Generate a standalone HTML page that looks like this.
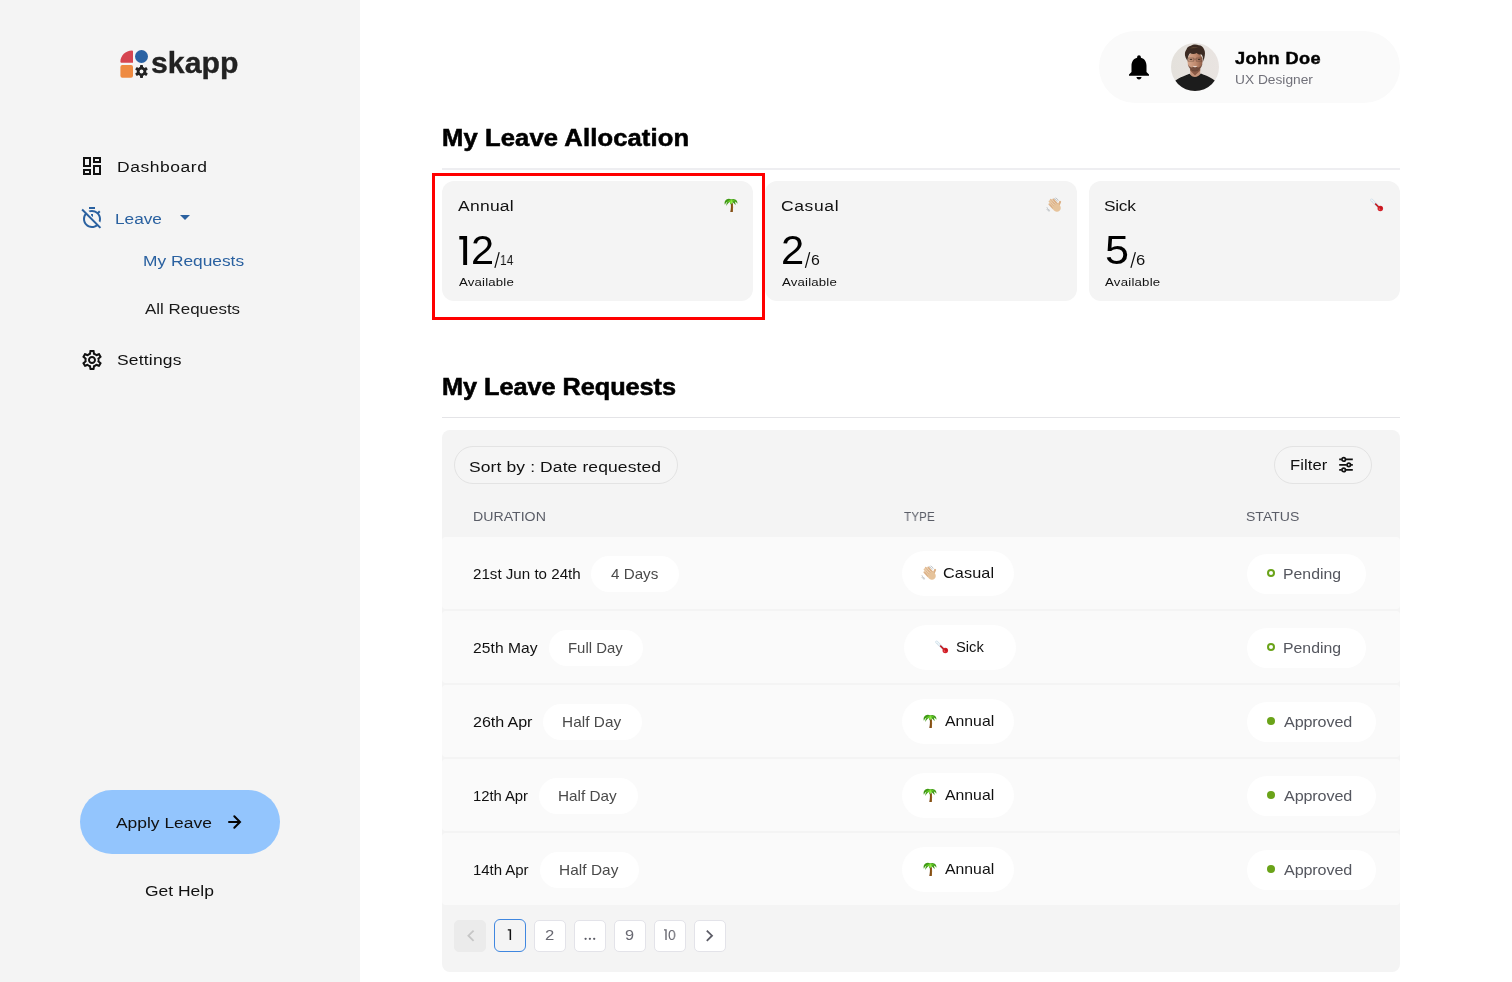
<!DOCTYPE html>
<html><head><meta charset="utf-8"><title>Leave</title>
<style>
*{box-sizing:border-box;margin:0;padding:0}
html,body{width:1512px;height:982px;overflow:hidden;background:#fff;font-family:"Liberation Sans",sans-serif}
body{position:relative}
.t{position:absolute;white-space:nowrap;line-height:1;transform-origin:0 0;will-change:transform}
.abs,.row,.pill,.ring,.dot,.pb,.em,.ic{position:absolute}
.side{left:0;top:0;width:360px;height:982px;background:#f4f4f4}
.btn{left:80px;top:790px;width:200px;height:64px;border-radius:32px;background:#93c5fd}
.hdr{left:1099px;top:31px;width:301px;height:72px;border-radius:36px;background:#fafafa}
.hr{left:442px;width:958px;height:1px;background:#e4e4e7}
.card{top:181px;width:311.33px;height:120px;border-radius:12px;background:#f4f4f4}
.red{left:432px;top:173px;width:333px;height:147px;border:3px solid #ff0000}
.tbl{left:442px;top:429.500px;width:958px;height:542px;border-radius:8px;background:#f4f4f4}
.row{left:442px;width:958px;height:72.300px;background:#fafafa;border-radius:4px}
.pill{background:#fff;border-radius:30px}
.opill{border:1px solid #e3e3e3;border-radius:30px;background:#f5f5f5}
.ring{width:8px;height:8px;border-radius:50%;border:2px solid #6aa319}
.dot{width:8px;height:8px;border-radius:50%;background:#6aa319}
.pb{top:919.500px;width:32px;height:32px;border-radius:5px;background:#fff;border:1.200px solid #e3e3e9}
.pb.dis{background:#ebebeb;border-color:#ebebeb}
.pb.act{background:transparent;border:1.700px solid #3f87e0;top:919.100px;height:32.700px;width:32.200px;margin-left:-.1px;border-radius:6px}
</style></head><body>
<div class="abs side"></div>
<div class="abs btn"></div>
<div class="abs hdr"></div>
<div class="abs hr" style="top:168px;height:2px;background:#eeeef1"></div>
<div class="abs hr" style="top:417px"></div>
<div class="abs card" style="left:442px"></div>
<div class="abs card" style="left:765.33px"></div>
<div class="abs card" style="left:1088.67px"></div>
<div class="abs red"></div>
<div class="abs tbl"></div>
<div class="abs opill" style="left:454px;top:446px;width:224px;height:38px"></div>
<div class="abs opill" style="left:1274px;top:446px;width:98px;height:38px"></div>
<svg width="0" height="0" style="position:absolute">
<defs>
<symbol id="palm" viewBox="0 0 16 16">
 <path d="M9.600 6c.7 2.700.6 5.800.1 8.900H7.300c.7-3.100.8-6 .4-8.900z" fill="#7a4614"/>
 <path d="M8.500 8c.3 2.300.2 4.600 0 6.900h1.200c.4-2.900.5-5.300.1-7.400z" fill="#9a6420" opacity=".8"/>
 <path d="M8.200 2.500C6.300 1.200 3.600 1.600 2.200 3.800c-.8 1.300-.7 2.700-.3 3.900C2.500 6.100 3.400 5 4.600 4.400c-1 1.300-1.400 2.800-1.100 4.600C4.300 7 5.500 5.700 7 5.100c0 .9.400 1.700 1.100 2.300.2-.9.700-1.700 1.300-2.200 1.300.5 2.300 1.600 3 3.100.3-1.500 0-2.800-.8-3.900 1.100.3 2.100 1.100 2.800 2.300.2-1.800-.5-3.400-2.100-4.200-1.300-.8-2.900-.8-4.100 0z" fill="#3f9a14"/>
 <path d="M8.200 2.500c1.400 0 2.800.4 3.800 1.400-.9-.1-1.800.2-2.600 1.300C8.800 5.700 8.300 6.500 8.100 7.400 7.400 6.800 7 6 7 5.100c-.9-.3-2-.2-3.100.4 1-1.700 2.500-2.700 4.300-3z" fill="#62c625"/>
 <path d="M8.200 2.900c.8.400 1.300 1.100 1.400 2-.6.500-1 1.200-1.400 2.100-.6-.6-.9-1.300-.9-2 0-.8.400-1.500.9-2.100z" fill="#90ea45"/>
</symbol>
<symbol id="wave" viewBox="0 0 16 16">
 <path d="M12.300 9.200L14.100 4.900" stroke="#dcb085" stroke-width="2.100" stroke-linecap="round"/>
 <g transform="translate(10.500 10.500) rotate(-42) scale(1.080)">
  <rect x="-3.700" y="-7.600" width="1.750" height="7" rx=".87" fill="#deb58c"/>
  <rect x="-1.850" y="-9.400" width="1.750" height="8.500" rx=".87" fill="#e6c39b"/>
  <rect x="0" y="-9.700" width="1.750" height="9" rx=".87" fill="#e2bb93"/>
  <rect x="1.850" y="-8.400" width="1.700" height="8" rx=".85" fill="#dcb085"/>
  <ellipse cx="0" cy=".2" rx="3.700" ry="4" fill="#e6c39b"/>
  <path d="M-2.800-2.500v-3M-.95-2.500v-4M.95-2.500v-4" stroke="#d1a077" stroke-width=".35" fill="none"/>
 </g>
 <path d="M8.300 1.700c1.200.4 2.200 1.300 2.800 2.500M9.900 1c1 .5 1.800 1.300 2.300 2.300" stroke="#aab0b5" stroke-width=".7" fill="none" stroke-linecap="round"/>
 <path d="M1 10.600c.5 1.200 1.400 2.200 2.700 2.800M.9 12.300c.5.800 1.200 1.500 2.100 1.900" stroke="#aab0b5" stroke-width=".7" fill="none" stroke-linecap="round"/>
</symbol>
<symbol id="thermo" viewBox="0 0 16 16">
 <path d="M2.600 3l7.400 7.300" stroke="#cfe0ea" stroke-width="2.700" stroke-linecap="round"/>
 <path d="M2.600 3l7.400 7.300" stroke="#f4f9fc" stroke-width="1.300" stroke-linecap="round"/>
 <path d="M3.100 4.800l.9-.9M4.500 6.200l.9-.9M5.900 7.600l.9-.9" stroke="#c2d6e2" stroke-width=".5"/>
 <path d="M6.600 7l4 4" stroke="#bf1219" stroke-width="1.600" stroke-linecap="round"/>
 <circle cx="11.300" cy="11.500" r="2.750" fill="#d4212a"/>
 <circle cx="10.500" cy="12.100" r=".8" fill="#ec6468"/>
 <circle cx="12" cy="10.800" r="1.200" fill="#b80f17" opacity=".6"/>
</symbol>
</defs></svg>

<!-- logo -->
<svg class="ic" style="left:120px;top:50px" width="29" height="28" viewBox="0 0 29 28">
 <path d="M13 12.700H1.400a1 1 0 0 1-1-1C.4 5.400 5.600.4 12 .4a1 1 0 0 1 1 1z" fill="#d64550"/>
 <circle cx="21.500" cy="6.500" r="6.500" fill="#2a62a3"/>
 <rect x=".4" y="15" width="12.600" height="12.800" rx="2" fill="#ee8a41"/>
 <g transform="translate(21.500 21.500)" fill="#222">
  <circle r="4.700"/>
  <g id="tth"><rect x="-1.500" y="-6.500" width="3" height="13" rx=".7"/></g>
  <use href="#tth" transform="rotate(60)"/><use href="#tth" transform="rotate(120)"/>
  <circle r="1.900" fill="#f4f4f4"/>
 </g>
</svg>

<!-- dashboard icon -->
<svg class="ic" style="left:80px;top:153.500px" width="24" height="24" viewBox="0 0 24 24" fill="#111"><path d="M19 5v2h-4V5h4M9 5v6H5V5h4m10 8v6h-4v-6h4M9 17v2H5v-2h4M21 3h-8v6h8V3zM11 3H3v10h8V3zm10 8h-8v10h8V11zm-10 4H3v6h8v-6z"/></svg>
<!-- timer off -->
<svg class="ic" style="left:80px;top:205.700px" width="24" height="24" viewBox="0 0 24 24" fill="#2A61A0"><path d="M10.040 6.290C10.660 6.110 11.320 6 12 6c3.860 0 7 3.140 7 7 0 .68-.11 1.340-.29 1.960l1.560 1.560c.47-1.080.73-2.270.73-3.520 0-2.120-.74-4.070-1.970-5.610l1.420-1.420c-.43-.51-.9-.99-1.410-1.410l-1.420 1.420C16.070 4.740 14.120 4 12 4c-1.250 0-2.440.26-3.530.72l1.570 1.570zM9 1h6v2H9zM13 8h-2v1.170l2 2zM2.810 2.810L1.390 4.220l3.400 3.400C3.670 9.120 3 10.980 3 13c0 4.970 4.020 9 9 9 2.020 0 3.880-.67 5.380-1.790l2.400 2.400 1.410-1.410L2.810 2.810zM12 20c-3.860 0-7-3.140-7-7 0-1.470.45-2.830 1.220-3.950l9.730 9.730C14.830 19.550 13.470 20 12 20z"/></svg>
<!-- caret -->
<svg class="ic" style="left:173px;top:205px" width="24" height="24" viewBox="0 0 24 24" fill="#2A61A0"><path d="M7 10l5 5 5-5z"/></svg>
<!-- settings -->
<svg class="ic" style="left:80px;top:347.500px" width="24" height="24" viewBox="0 0 24 24" fill="#111"><path d="M19.430 12.980c.04-.32.070-.64.070-.98 0-.34-.03-.66-.07-.98l2.110-1.650c.19-.15.240-.42.120-.64l-2-3.460c-.09-.16-.26-.25-.44-.25-.06 0-.12.010-.17.030l-2.490 1c-.52-.4-1.080-.73-1.690-.98l-.38-2.650C14.460 2.180 14.250 2 14 2h-4c-.25 0-.46.180-.49.420l-.38 2.650c-.61.250-1.170.59-1.690.98l-2.490-1c-.06-.02-.12-.03-.18-.03-.17 0-.34.090-.43.250l-2 3.460c-.13.220-.07.490.12.640l2.110 1.650c-.04.320-.07.650-.07.980 0 .33.030.66.070.98l-2.110 1.650c-.19.150-.24.420-.12.640l2 3.460c.9.160.26.250.44.250.06 0 .12-.1.170-.03l2.490-1c.52.400 1.080.73 1.690.98l.38 2.650c.3.240.24.420.49.420h4c.25 0 .46-.18.490-.42l.38-2.650c.61-.25 1.170-.59 1.690-.98l2.490 1c.6.020.12.030.18.030.17 0 .34-.9.430-.25l2-3.460c.12-.22.070-.49-.12-.64l-2.110-1.650zm-1.980-1.710c.4.310.5.520.5.730 0 .21-.2.430-.5.730l-.14 1.130.89.700 1.080.84-.7 1.210-1.270-.51-1.040-.42-.9.680c-.43.320-.84.560-1.250.73l-1.060.43-.16 1.130-.2 1.350h-1.400l-.19-1.350-.16-1.130-1.060-.43c-.43-.18-.83-.41-1.230-.71l-.91-.7-1.060.43-1.270.51-.7-1.210 1.080-.84.890-.7-.14-1.130c-.03-.31-.05-.54-.05-.74s.02-.43.050-.73l.14-1.130-.89-.7-1.080-.84.700-1.210 1.270.51 1.040.42.900-.68c.43-.32.840-.56 1.250-.73l1.060-.43.160-1.130.2-1.350h1.390l.19 1.350.16 1.130 1.060.43c.43.180.83.410 1.230.71l.91.700 1.060-.43 1.270-.51.700 1.210-1.070.85-.89.700.14 1.130zM12 8c-2.210 0-4 1.790-4 4s1.790 4 4 4 4-1.790 4-4-1.790-4-4-4zm0 6c-1.100 0-2-.9-2-2s.9-2 2-2 2 .9 2 2-.9 2-2 2z"/></svg>
<!-- arrow forward -->
<svg class="ic" style="left:224px;top:810px" width="24" height="24" viewBox="0 0 24 24" fill="none" stroke="#050505" stroke-width="2" stroke-linecap="round"><path d="M5 12H15.500M10.300 6.300L16 12l-5.700 5.700"/></svg>
<!-- bell -->
<svg class="ic" style="left:1124px;top:52px" width="30" height="30" viewBox="0 0 24 24" fill="#000"><path d="M12 22c1.100 0 2-.9 2-2h-4c0 1.100.89 2 2 2zm6-6v-5c0-3.070-1.640-5.640-4.500-6.320V4c0-.83-.67-1.500-1.500-1.500s-1.500.67-1.500 1.500v.68C7.630 5.360 6 7.920 6 11v5l-2 2v1h16v-1l-2-2z"/></svg>
<!-- avatar -->
<svg class="ic" style="left:1171px;top:43px" width="48" height="48" viewBox="0 0 48 48">
 <defs><clipPath id="av"><circle cx="24" cy="24" r="24"/></clipPath><filter id="bl" x="-20%" y="-20%" width="140%" height="140%"><feGaussianBlur stdDeviation=".55"/></filter>
 <linearGradient id="bgg" x1="0" x2="1"><stop offset="0" stop-color="#e4e1dc"/><stop offset="1" stop-color="#e9e4e1"/></linearGradient>
 <linearGradient id="skn" x1="0" x2="1"><stop offset="0" stop-color="#d6a88d"/><stop offset=".55" stop-color="#c08a6e"/><stop offset="1" stop-color="#8e5d47"/></linearGradient></defs>
 <g clip-path="url(#av)"><rect width="48" height="48" fill="url(#bgg)"/>
 <g filter="url(#bl)">
  <path d="M19.200 25h10v9h-10z" fill="#c4937a"/>
  <path d="M19.200 27.500l4.800 5 5.200-5v-2c-2 2.200-7.500 2.600-10 0z" fill="#8a5a45"/>
  <path d="M2 41c1.500-4.500 8-6.800 16.500-10.200 1.400 2 3.300 3.300 5.500 3.300s4.300-1.500 5.800-3.500C38 33.800 44.500 36.500 46 41v8H2z" fill="#1a1a1a"/>
  <ellipse cx="24" cy="18.200" rx="7.600" ry="9.400" fill="url(#skn)"/>
  <path d="M16.800 21c1 4.600 4 7.400 7.200 7.400s6.400-2.800 7.400-7.400c-1.200 2.300-2.600 3.200-4 3.400-1.200-1-5.600-1-6.800 0-1.400-.3-2.800-1.200-3.800-3.400z" fill="#5f3d2f" opacity=".8"/>
  <path d="M21.800 22.700c1.500.5 2.900.5 4.400 0-.5 1.100-1.300 1.500-2.200 1.500s-1.700-.4-2.200-1.500z" fill="#e6d3c8"/>
  <path d="M14.600 14.500c-1.300-3-.7-6.200 1-8.300.3-1.800 2.200-3.300 4.300-3.500 2-1.400 5.800-1.500 7.800-.4 2.600.1 4.600 1.800 5.300 4 1.300 2.300 1.200 5.300.3 8.700l-.9 3.400c-.2-3.200-.6-5.400-1.900-7-1.700.6-3.400-.1-4.800-1.500-1.900 1.300-4.500 1.200-6.700.4-1.400 1.400-2.200 3.800-2.700 7.400z" fill="#3b2a20"/>
  <path d="M19 5.500c2.500-1.800 6-1.800 8.500-.3-3-.3-6 .2-8.500.3z" fill="#5b4434"/>
  <path d="M17 15h5.800v3.200H17zM25.200 15h5.800v3.200h-5.800zM22.800 16.200h2.400" fill="none" stroke="#5a4034" stroke-width=".55" opacity=".8"/>
  <path d="M18.700 16.400h2.500M26.800 16.400h2.500" stroke="#2e1f18" stroke-width=".9"/>
 </g></g>
</svg>
<!-- filter icon -->
<svg class="ic" style="left:1338px;top:456px" width="16" height="17" viewBox="0 0 16 17" fill="none" stroke="#111" stroke-width="1.700">
 <path d="M1.200 3.400h2.400M8 3.400h6.800M1.200 8.800h7.500M13.100 8.800h1.700M1.200 13.900h2.400M8 13.900h6.800"/>
 <circle cx="5.700" cy="3.400" r="1.750"/><circle cx="10.800" cy="8.800" r="1.750"/><circle cx="5.700" cy="13.900" r="1.750"/>
</svg>
<!-- emoji in cards -->
<svg class="em" style="left:722.500px;top:197px" width="16" height="16" viewBox="0 0 16 16"><use href="#palm"/></svg>
<svg class="em" style="left:1045.800px;top:197px" width="16" height="16" viewBox="0 0 16 16"><use href="#wave"/></svg>
<svg class="em" style="left:1368.500px;top:196.500px" width="16" height="16" viewBox="0 0 16 16"><use href="#thermo"/></svg>
<div class="row" style="top:537.2px"></div>
<div class="pill" style="left:590.9px;top:555.5px;width:88.0px;height:36px"></div>
<div class="pill" style="left:902.0px;top:551.0px;width:112px;height:45px"></div>
<svg class="em" style="left:921px;top:565.0px" width="16" height="16" viewBox="0 0 16 16"><use href="#wave"/></svg>
<div class="pill" style="left:1247px;top:553.5px;width:118.7px;height:40px"></div>
<div class="ring" style="left:1267px;top:569.1px"></div>
<div class="row" style="top:611.2px"></div>
<div class="pill" style="left:549.1px;top:629.5px;width:94.1px;height:36px"></div>
<div class="pill" style="left:903.8px;top:625.0px;width:112px;height:45px"></div>
<svg class="em" style="left:933.5px;top:639.3px" width="16" height="16" viewBox="0 0 16 16"><use href="#thermo"/></svg>
<div class="pill" style="left:1247px;top:627.5px;width:118.7px;height:40px"></div>
<div class="ring" style="left:1267px;top:643.1px"></div>
<div class="row" style="top:685.2px"></div>
<div class="pill" style="left:542.8px;top:703.5px;width:99.2px;height:36px"></div>
<div class="pill" style="left:902.4px;top:699.0px;width:112px;height:45px"></div>
<svg class="em" style="left:921.5px;top:713.0px" width="16" height="16" viewBox="0 0 16 16"><use href="#palm"/></svg>
<div class="pill" style="left:1247px;top:701.5px;width:128.7px;height:40px"></div>
<div class="dot" style="left:1266.800px;top:717.2px"></div>
<div class="row" style="top:759.2px"></div>
<div class="pill" style="left:538.8px;top:777.5px;width:98.8px;height:36px"></div>
<div class="pill" style="left:902.4px;top:773.0px;width:112px;height:45px"></div>
<svg class="em" style="left:921.5px;top:787.0px" width="16" height="16" viewBox="0 0 16 16"><use href="#palm"/></svg>
<div class="pill" style="left:1247px;top:775.5px;width:128.7px;height:40px"></div>
<div class="dot" style="left:1266.800px;top:791.2px"></div>
<div class="row" style="top:833.2px"></div>
<div class="pill" style="left:540.3px;top:851.5px;width:98.6px;height:36px"></div>
<div class="pill" style="left:902.4px;top:847.0px;width:112px;height:45px"></div>
<svg class="em" style="left:921.5px;top:861.0px" width="16" height="16" viewBox="0 0 16 16"><use href="#palm"/></svg>
<div class="pill" style="left:1247px;top:849.5px;width:128.7px;height:40px"></div>
<div class="dot" style="left:1266.800px;top:865.2px"></div>
<div class="pb dis" style="left:454px"></div>
<div class="pb act" style="left:494px"></div>
<div class="pb" style="left:534px"></div>
<div class="pb" style="left:574px"></div>
<div class="pb" style="left:614px"></div>
<div class="pb" style="left:654px"></div>
<div class="pb" style="left:694px"></div>
<!-- pagination chevrons -->
<svg class="ic" style="left:454px;top:919px" width="272" height="33" viewBox="454 919 272 33">
 <path d="M473.600 930.600L468.400 935.700L473.600 940.800" fill="none" stroke="#c6c6c6" stroke-width="1.800"/>
 <path d="M706.800 930.600L712 935.700L706.800 940.800" fill="none" stroke="#5c5c66" stroke-width="1.800"/>
 <g fill="#5c5c66"><circle cx="585.600" cy="938.800" r="1.150"/><circle cx="589.900" cy="938.800" r="1.150"/><circle cx="594.200" cy="938.800" r="1.150"/></g>
 <path d="M507.800 929.200H511.100V939.900H509.600V930.500H507.800z" fill="#111"/>
 <path d="M664 929.200H666.700V939.900H665.300V930.400H664z" fill="#686871"/>
</svg>
<!-- big 1 + slashes -->
<svg class="ic" style="left:442px;top:230px" width="720" height="44" viewBox="442 230 720 44">
 <path d="M459.300 236H467.100V264.900H463.200V239.600H459.300z" fill="#000"/>
 <g stroke="#111" stroke-width="1.250" fill="none"><path d="M499.200 252.100L494.900 267.800M809.700 252.100L805.400 267.800M1135.400 252.100L1130.900 267.800"/></g>
</svg>
<span class="t" id="logo" style="left:151.40px;top:47.51px;font-size:30px;font-weight:bold;color:#222222;letter-spacing:0.045px;transform:scaleX(1.0071);-webkit-text-stroke:.35px #222">skapp</span>
<span class="t" id="nav1" style="left:117.20px;top:159.33px;font-size:15.2px;font-weight:normal;color:#111;letter-spacing:0.489px;transform:scaleX(1.1500);">Dashboard</span>
<span class="t" id="nav2" style="left:115.20px;top:211.23px;font-size:15.2px;font-weight:normal;color:#2A61A0;letter-spacing:-0.001px;transform:scaleX(1.1350);">Leave</span>
<span class="t" id="nav3" style="left:142.80px;top:253.33px;font-size:15.2px;font-weight:normal;color:#2A61A0;letter-spacing:0.001px;transform:scaleX(1.1402);">My Requests</span>
<span class="t" id="nav4" style="left:144.60px;top:301.43px;font-size:15.2px;font-weight:normal;color:#1a1a1a;letter-spacing:-0.001px;transform:scaleX(1.1153);">All Requests</span>
<span class="t" id="nav5" style="left:116.60px;top:352.43px;font-size:15.2px;font-weight:normal;color:#111;letter-spacing:0.166px;transform:scaleX(1.1500);">Settings</span>
<span class="t" id="apply" style="left:116.00px;top:815.33px;font-size:15.2px;font-weight:normal;color:#111;letter-spacing:0.001px;transform:scaleX(1.1470);">Apply Leave</span>
<span class="t" id="help" style="left:144.60px;top:883.33px;font-size:15.2px;font-weight:normal;color:#111;letter-spacing:0.001px;transform:scaleX(1.1500);">Get Help</span>
<span class="t" id="name" style="left:1234.90px;top:49.91px;font-size:17px;font-weight:bold;color:#000;letter-spacing:0.360px;transform:scaleX(1.0700);-webkit-text-stroke:.45px #000">John Doe</span>
<span class="t" id="role" style="left:1234.80px;top:73.16px;font-size:13.4px;font-weight:normal;color:#71717a;letter-spacing:0.000px;transform:scaleX(1.0267);">UX Designer</span>
<span class="t" id="h1" style="left:442.00px;top:127.03px;font-size:23px;font-weight:bold;color:#000;letter-spacing:0.126px;transform:scaleX(1.1100);-webkit-text-stroke:.55px #000">My Leave Allocation</span>
<span class="t" id="h2" style="left:442.00px;top:376.03px;font-size:23px;font-weight:bold;color:#000;letter-spacing:-0.012px;transform:scaleX(1.0972);-webkit-text-stroke:.55px #000">My Leave Requests</span>
<span class="t" id="c1t" style="left:458.20px;top:198.33px;font-size:15.2px;font-weight:normal;color:#111;letter-spacing:0.235px;transform:scaleX(1.1500);">Annual</span>
<span class="t" id="c1n2" style="left:471.40px;top:230.09px;font-size:41px;font-weight:normal;color:#000;letter-spacing:0.000px;transform:scaleX(1.0126);">2</span>
<span class="t" id="c1d" style="left:500.00px;top:252.55px;font-size:14px;font-weight:normal;color:#111;letter-spacing:0.219px;transform:scaleX(0.8400);">14</span>
<span class="t" id="c1a" style="left:459.20px;top:276.77px;font-size:11.5px;font-weight:normal;color:#111;letter-spacing:0.147px;transform:scaleX(1.1500);">Available</span>
<span class="t" id="c2t" style="left:781.30px;top:198.33px;font-size:15.2px;font-weight:normal;color:#111;letter-spacing:0.548px;transform:scaleX(1.1500);">Casual</span>
<span class="t" id="c2n" style="left:781.00px;top:230.09px;font-size:41px;font-weight:normal;color:#000;letter-spacing:0.000px;transform:scaleX(1.0188);">2</span>
<span class="t" id="c2d" style="left:811.40px;top:252.65px;font-size:14px;font-weight:normal;color:#111;letter-spacing:0.000px;transform:scaleX(1.1352);">6</span>
<span class="t" id="c2a" style="left:782.30px;top:276.77px;font-size:11.5px;font-weight:normal;color:#111;letter-spacing:0.147px;transform:scaleX(1.1500);">Available</span>
<span class="t" id="c3t" style="left:1104.40px;top:198.33px;font-size:15.2px;font-weight:normal;color:#111;letter-spacing:-0.265px;transform:scaleX(1.1407);">Sick</span>
<span class="t" id="c3n" style="left:1105.20px;top:230.39px;font-size:41px;font-weight:normal;color:#000;letter-spacing:0.000px;transform:scaleX(1.0526);">5</span>
<span class="t" id="c3d" style="left:1136.40px;top:252.65px;font-size:14px;font-weight:normal;color:#111;letter-spacing:0.000px;transform:scaleX(1.1850);">6</span>
<span class="t" id="c3a" style="left:1105.40px;top:276.77px;font-size:11.5px;font-weight:normal;color:#111;letter-spacing:0.194px;transform:scaleX(1.1500);">Available</span>
<span class="t" id="sort" style="left:469.10px;top:458.93px;font-size:15.2px;font-weight:normal;color:#111;letter-spacing:0.104px;transform:scaleX(1.1500);">Sort by : Date requested</span>
<span class="t" id="filter" style="left:1289.60px;top:457.43px;font-size:15.2px;font-weight:normal;color:#111;letter-spacing:0.080px;transform:scaleX(1.0939);">Filter</span>
<span class="t" id="th1" style="left:473.20px;top:509.86px;font-size:13.4px;font-weight:normal;color:#5a5d67;letter-spacing:0.001px;transform:scaleX(1.0567);">DURATION</span>
<span class="t" id="th2" style="left:903.80px;top:509.86px;font-size:13.4px;font-weight:normal;color:#5a5d67;letter-spacing:0.001px;transform:scaleX(0.8800);">TYPE</span>
<span class="t" id="th3" style="left:1246.00px;top:509.86px;font-size:13.4px;font-weight:normal;color:#5a5d67;letter-spacing:0.001px;transform:scaleX(1.0490);">STATUS</span>
<span class="t" id="r0d" style="left:472.70px;top:566.90px;font-size:14.3px;font-weight:normal;color:#111;letter-spacing:0.001px;transform:scaleX(1.0580);">21st Jun to 24th</span>
<span class="t" id="r0p" style="left:610.70px;top:566.90px;font-size:14.3px;font-weight:normal;color:#4a4a4a;letter-spacing:-0.001px;transform:scaleX(1.0636);">4 Days</span>
<span class="t" id="r0t" style="left:943.10px;top:566.20px;font-size:14.3px;font-weight:normal;color:#111;letter-spacing:0.078px;transform:scaleX(1.1372);">Casual</span>
<span class="t" id="r0s" style="left:1283.20px;top:566.90px;font-size:14.3px;font-weight:normal;color:#55575f;letter-spacing:-0.000px;transform:scaleX(1.1059);">Pending</span>
<span class="t" id="r1d" style="left:472.70px;top:640.90px;font-size:14.3px;font-weight:normal;color:#111;letter-spacing:0.058px;transform:scaleX(1.0914);">25th May</span>
<span class="t" id="r1p" style="left:568.10px;top:640.90px;font-size:14.3px;font-weight:normal;color:#4a4a4a;letter-spacing:0.001px;transform:scaleX(1.0431);">Full Day</span>
<span class="t" id="r1t" style="left:955.60px;top:640.20px;font-size:14.3px;font-weight:normal;color:#111;letter-spacing:0.001px;transform:scaleX(1.0308);">Sick</span>
<span class="t" id="r1s" style="left:1283.20px;top:640.90px;font-size:14.3px;font-weight:normal;color:#55575f;letter-spacing:-0.000px;transform:scaleX(1.1059);">Pending</span>
<span class="t" id="r2d" style="left:472.70px;top:714.90px;font-size:14.3px;font-weight:normal;color:#111;letter-spacing:-0.057px;transform:scaleX(1.1250);">26th Apr</span>
<span class="t" id="r2p" style="left:562.00px;top:714.90px;font-size:14.3px;font-weight:normal;color:#4a4a4a;letter-spacing:0.060px;transform:scaleX(1.0722);">Half Day</span>
<span class="t" id="r2t" style="left:945.00px;top:714.20px;font-size:14.3px;font-weight:normal;color:#111;letter-spacing:0.001px;transform:scaleX(1.1045);">Annual</span>
<span class="t" id="r2s" style="left:1284.20px;top:714.90px;font-size:14.3px;font-weight:normal;color:#55575f;letter-spacing:-0.115px;transform:scaleX(1.1300);">Approved</span>
<span class="t" id="r3d" style="left:472.70px;top:788.90px;font-size:14.3px;font-weight:normal;color:#111;letter-spacing:-0.063px;transform:scaleX(1.0404);">12th Apr</span>
<span class="t" id="r3p" style="left:558.00px;top:788.90px;font-size:14.3px;font-weight:normal;color:#4a4a4a;letter-spacing:-0.000px;transform:scaleX(1.0704);">Half Day</span>
<span class="t" id="r3t" style="left:945.00px;top:788.20px;font-size:14.3px;font-weight:normal;color:#111;letter-spacing:0.001px;transform:scaleX(1.1045);">Annual</span>
<span class="t" id="r3s" style="left:1284.20px;top:788.90px;font-size:14.3px;font-weight:normal;color:#55575f;letter-spacing:-0.115px;transform:scaleX(1.1300);">Approved</span>
<span class="t" id="r4d" style="left:472.70px;top:862.90px;font-size:14.3px;font-weight:normal;color:#111;letter-spacing:-0.062px;transform:scaleX(1.0519);">14th Apr</span>
<span class="t" id="r4p" style="left:559.30px;top:862.90px;font-size:14.3px;font-weight:normal;color:#4a4a4a;letter-spacing:0.060px;transform:scaleX(1.0759);">Half Day</span>
<span class="t" id="r4t" style="left:945.00px;top:862.20px;font-size:14.3px;font-weight:normal;color:#111;letter-spacing:0.001px;transform:scaleX(1.1045);">Annual</span>
<span class="t" id="r4s" style="left:1284.20px;top:862.90px;font-size:14.3px;font-weight:normal;color:#55575f;letter-spacing:-0.115px;transform:scaleX(1.1300);">Approved</span>
<span class="t" id="pg0" style="left:545.00px;top:928.00px;font-size:14.3px;font-weight:normal;color:#686871;letter-spacing:0.000px;transform:scaleX(1.1679);">2</span>
<span class="t" id="pg1" style="left:625.00px;top:928.00px;font-size:14.3px;font-weight:normal;color:#686871;letter-spacing:0.000px;transform:scaleX(1.1383);">9</span>
<span class="t" id="pg2" style="left:668.00px;top:928.00px;font-size:14.3px;font-weight:normal;color:#686871;letter-spacing:0.000px;transform:scaleX(0.9612);">0</span>
</body></html>
